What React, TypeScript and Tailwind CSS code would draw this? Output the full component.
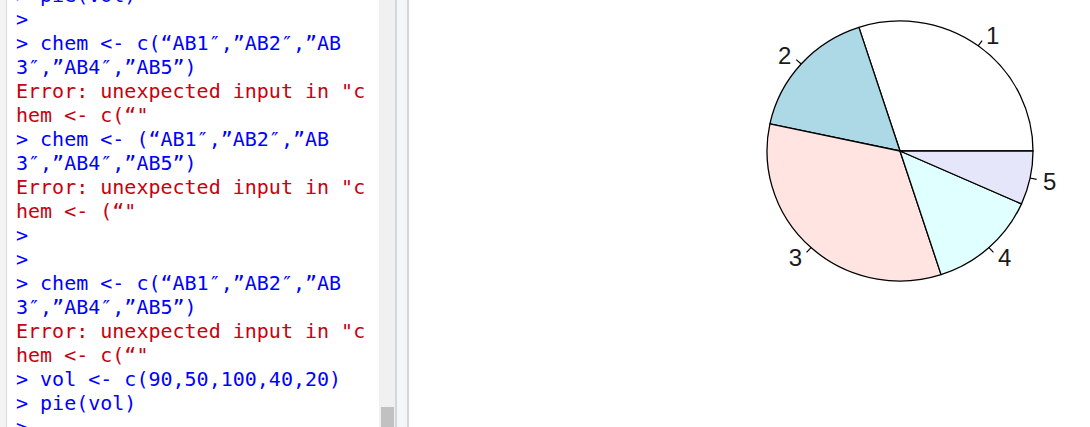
const lines: { t: string; err?: boolean }[] = [
  { t: "> pie(vol)" },
  { t: ">" },
  { t: "> chem <- c(“AB1″,”AB2″,”AB" },
  { t: "3″,”AB4″,”AB5”)" },
  { t: 'Error: unexpected input in "c', err: true },
  { t: 'hem <- c(“"', err: true },
  { t: "> chem <- (“AB1″,”AB2″,”AB" },
  { t: "3″,”AB4″,”AB5”)" },
  { t: 'Error: unexpected input in "c', err: true },
  { t: 'hem <- (“"', err: true },
  { t: ">" },
  { t: ">" },
  { t: "> chem <- c(“AB1″,”AB2″,”AB" },
  { t: "3″,”AB4″,”AB5”)" },
  { t: 'Error: unexpected input in "c', err: true },
  { t: 'hem <- c(“"', err: true },
  { t: "> vol <- c(90,50,100,40,20)" },
  { t: "> pie(vol)" },
  { t: ">" },
];

const vol = [90, 50, 100, 40, 20];
const cols = ["#ffffff", "#add8e6", "#ffe4e1", "#e0ffff", "#e6e6fa"];

function Pie() {
  const cx = 491;
  const cy = 151;
  const rx = 133;
  const ry = 130;
  const total = vol.reduce((a, b) => a + b, 0);
  const pt = (a: number, k: number) => [cx + rx * k * Math.cos(a), cy - ry * k * Math.sin(a)];
  let acc = 0;
  const slices = vol.map((v, i) => {
    const a0 = (acc / total) * 2 * Math.PI;
    acc += v;
    const a1 = (acc / total) * 2 * Math.PI;
    const mid = (a0 + a1) / 2;
    const [x0, y0] = pt(a0, 1);
    const [x1, y1] = pt(a1, 1);
    const large = a1 - a0 > Math.PI ? 1 : 0;
    const d = `M${cx},${cy} L${x0},${y0} A${rx},${ry} 0 ${large} 0 ${x1},${y1} Z`;
    const [t0x, t0y] = pt(mid, 1);
    const [t1x, t1y] = pt(mid, 1.05);
    const [lx, ly] = pt(mid, 1.1);
    return { d, fill: cols[i], t0x, t0y, t1x, t1y, lx, ly, right: Math.cos(mid) > 0, label: String(i + 1) };
  });
  return (
    <svg width="680" height="427" viewBox="0 0 680 427">
      {slices.map((s) => (
        <g key={s.label}>
          <path d={s.d} fill={s.fill} stroke="#000" strokeWidth="1.3" strokeLinejoin="round" />
          <line x1={s.t0x} y1={s.t0y} x2={s.t1x} y2={s.t1y} stroke="#000" strokeWidth="1.2" />
          <text
            x={s.lx}
            y={s.ly + 9}
            textAnchor={s.right ? "start" : "end"}
            fontSize="24"
            fill="#1a1a1a"
            style={{ fontFamily: '"Liberation Sans", Arial, sans-serif' }}
          >
            {s.label}
          </text>
        </g>
      ))}
    </svg>
  );
}

export default function App() {
  return (
    <div className="flex w-[1090px] h-[427px] overflow-hidden bg-white">
      <div className="w-[7px] shrink-0 bg-[#f3f3f3] border-r border-[#d9d9d9]" />
      <div className="w-[372px] shrink-0 overflow-hidden pl-[9px]">
        <div className="mt-[-17px] font-['DejaVu_Sans_Mono',monospace] text-[20px] leading-[24px] whitespace-pre">
          {lines.map((l, i) => (
            <div key={i} className={l.err ? "text-[#c8000f]" : "text-[#0000ff]"}>
              {l.t}
            </div>
          ))}
        </div>
      </div>
      <div className="w-[16px] shrink-0 bg-[#f0f0f0] flex flex-col justify-end items-center">
        <div className="w-[13px] h-[20px] bg-[#c1c1c1]" />
      </div>
      <div className="w-[14px] shrink-0 bg-[#f5f6f8] border-l-2 border-r-2 border-[#d3d6da]" />
      <div className="flex-1">
        <Pie />
      </div>
    </div>
  );
}
